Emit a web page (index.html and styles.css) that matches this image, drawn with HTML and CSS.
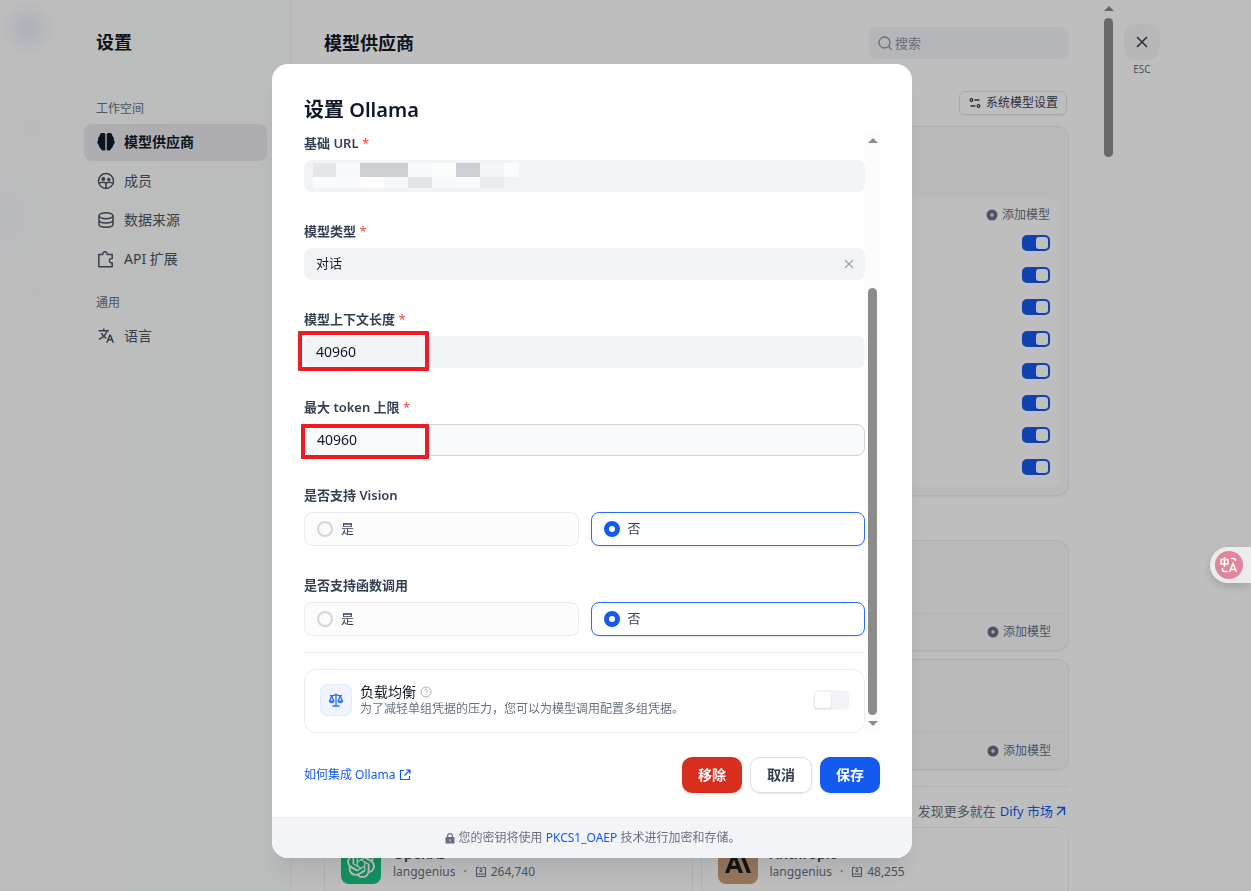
FILE: index.html
```
<!DOCTYPE html>
<html lang="zh-CN">
	<head>
		<meta charset="utf-8">
		<title>设置</title>
		<link rel="stylesheet" href="styles.css">
	</head>
	<body>
		<svg width="0" height="0" class="defs">
			<symbol id="plus" viewBox="0 0 12 12"><path fill-rule="evenodd" fill="currentColor" d="M6 .5a5.500 5.500 0 1 0 0 11a5.500 5.500 0 0 0 0-11zM5.400 4h1.200v1.400H8v1.200H6.600V8H5.400V6.600H4V5.400h1.400z"/></symbol>
			<symbol id="count" viewBox="0 0 12 12"><path fill="none" stroke="currentColor" d="M4 1.500H1.500v9h9v-9H8M1.500 8h9M6 2v4M4.500 4.500L6 6l1.500-1.500M4.500 2h3"/></symbol>
		</svg>

		<div class="app">
			<nav class="side">
				<h1 class="side-title">设置</h1>
				<div class="group">工作空间</div>
				<a class="item active" href="#">
					<svg width="18" height="18" viewBox="0 0 18 18"><path fill="currentColor" d="M8.300 1v16a3 3 0 0 1-4.600-1.600A3 3 0 0 1 2 12.300A3.600 3.600 0 0 1 1.200 7a3.200 3.200 0 0 1 1.400-3.700A3.200 3.200 0 0 1 8.300 1zM9.700 1v16a3 3 0 0 0 4.600-1.600a3 3 0 0 0 1.700-3.100A3.600 3.600 0 0 0 16.800 7a3.200 3.200 0 0 0-1.400-3.700A3.200 3.200 0 0 0 9.700 1z"/></svg>
					模型供应商
				</a>
				<a class="item" href="#">
					<svg width="18" height="18" viewBox="0 0 18 18" fill="none" stroke="currentColor" stroke-width="1.500"><circle cx="9" cy="9" r="7.500"/><path d="M2 11.500c2-1.500 5-1.500 7-.5c2-1 5-1 7 .5M9 11v5.500"/><circle cx="6.300" cy="7" r="1.200" fill="currentColor"/><circle cx="11.800" cy="7.600" r="1" fill="currentColor"/></svg>
					成员
				</a>
				<a class="item" href="#">
					<svg width="18" height="18" viewBox="0 0 18 18" fill="none" stroke="currentColor" stroke-width="1.500"><ellipse cx="9" cy="4.800" rx="7" ry="3"/><path d="M2 4.800v8.400c0 1.700 3 3 7 3s7-1.300 7-3V4.800M2 9c0 1.700 3 3 7 3s7-1.300 7-3"/></svg>
					数据来源
				</a>
				<a class="item" href="#">
					<svg width="18" height="18" viewBox="0 0 18 18" fill="none" stroke="currentColor" stroke-width="1.500" stroke-linejoin="round"><path d="M1.800 4.500h4a2.200 2.200 0 1 1 4.300 0h5.100v4a2.200 2.200 0 1 0 0 4.200v4H1.800z"/></svg>
					API 扩展
				</a>
				<div class="group">通用</div>
				<a class="item" href="#">
					<svg width="20" height="20" viewBox="0 0 24 24"><path fill="currentColor" d="M18.500 10L22.900 21H20.745L19.544 18H15.454L14.255 21H12.101L16.500 10H18.500ZM10 2V4H16V6L14.032 6C13.242 8.366 12 10.506 10.411 12.301C11.134 12.946 11.917 13.518 12.747 14.008L12 15.885C10.924 15.278 9.919 14.552 9 13.725C7.214 15.332 5.109 16.555 2.799 17.273L2.262 15.344C4.238 14.720 6.045 13.674 7.590 12.302C6.463 11.028 5.509 9.580 4.767 8L7.007 8C7.570 9.039 8.240 10.003 9 10.877C10.228 9.465 11.220 7.816 11.909 6L2 6V4H8V2H10ZM17.500 12.885L16.253 16H18.745L17.500 12.885Z"/></svg>
					语言
				</a>
			</nav>

			<main class="main">
				<header class="head">
					<h2>模型供应商</h2>
					<label class="search">
						<svg width="16" height="16" viewBox="0 0 16 16" fill="none" stroke="currentColor" stroke-width="1.300"><circle cx="7.500" cy="7.500" r="5.500"/><path d="M11.500 11.500l3 3"/></svg>
						<input type="text" placeholder="搜索" aria-label="搜索">
					</label>
				</header>
				<div class="toolbar">
					<button class="system">
						<svg width="12" height="12" viewBox="0 0 12 12" fill="none" stroke="currentColor" stroke-width="1.300"><circle cx="2.500" cy="3" r="1.300"/><path d="M5.500 3H10.500M1.500 9h5"/><circle cx="9.500" cy="9" r="1.300"/></svg>
						系统模型设置
					</button>
				</div>

				<section class="provider first">
					<div class="summary"></div>
					<div class="models">
						<div class="add-row"><button class="add"><svg width="12" height="12"><use href="#plus"/></svg>添加模型</button></div>
						<div class="model"><input type="checkbox" class="toggle" aria-label="启用模型 1" checked></div>
						<div class="model"><input type="checkbox" class="toggle" aria-label="启用模型 2" checked></div>
						<div class="model"><input type="checkbox" class="toggle" aria-label="启用模型 3" checked></div>
						<div class="model"><input type="checkbox" class="toggle" aria-label="启用模型 4" checked></div>
						<div class="model"><input type="checkbox" class="toggle" aria-label="启用模型 5" checked></div>
						<div class="model"><input type="checkbox" class="toggle" aria-label="启用模型 6" checked></div>
						<div class="model"><input type="checkbox" class="toggle" aria-label="启用模型 7" checked></div>
						<div class="model"><input type="checkbox" class="toggle" aria-label="启用模型 8" checked></div>
					</div>
				</section>
				<section class="provider">
					<div class="summary"></div>
					<div class="bottom"><button class="add"><svg width="12" height="12"><use href="#plus"/></svg>添加模型</button></div>
				</section>
				<section class="provider">
					<div class="summary"></div>
					<div class="bottom"><button class="add"><svg width="12" height="12"><use href="#plus"/></svg>添加模型</button></div>
				</section>

				<div class="more">
					发现更多就在 <a href="#">Dify 市场<svg width="12" height="12" viewBox="0 0 12 12" fill="none" stroke="currentColor" stroke-width="1.400"><path d="M2 2.500h7.500V10M9.500 2.500L2 10"/></svg></a>
				</div>
				<div class="market">
					<article class="plugin">
						<div class="logo openai">
							<svg width="28" height="28" viewBox="0 0 24 24" fill="currentColor"><path d="M22.2819 9.8211a5.9847 5.9847 0 0 0-.5157-4.9108 6.0462 6.0462 0 0 0-6.5098-2.9A6.0651 6.0651 0 0 0 4.9807 4.1818a5.9847 5.9847 0 0 0-3.9977 2.9 6.0462 6.0462 0 0 0 .7427 7.0966 5.98 5.98 0 0 0 .511 4.9107 6.051 6.051 0 0 0 6.5146 2.9001A5.9847 5.9847 0 0 0 13.2599 24a6.0557 6.0557 0 0 0 5.7718-4.2058 5.9894 5.9894 0 0 0 3.9977-2.9001 6.0557 6.0557 0 0 0-.7475-7.0729zm-9.022 12.6081a4.4755 4.4755 0 0 1-2.8764-1.0408l.1419-.0804 4.7783-2.7582a.7948.7948 0 0 0 .3927-.6813v-6.7369l2.02 1.1686a.071.071 0 0 1 .038.052v5.5826a4.504 4.504 0 0 1-4.4945 4.4944zm-9.6607-4.1254a4.4708 4.4708 0 0 1-.5346-3.0137l.142.0852 4.783 2.7582a.7712.7712 0 0 0 .7806 0l5.8428-3.3685v2.3324a.0804.0804 0 0 1-.0332.0615L9.74 19.9502a4.4992 4.4992 0 0 1-6.1408-1.6464zM2.3408 7.8956a4.485 4.485 0 0 1 2.3655-1.9728V11.6a.7664.7664 0 0 0 .3879.6765l5.8144 3.3543-2.0201 1.1685a.0757.0757 0 0 1-.071 0l-4.8303-2.7865A4.504 4.504 0 0 1 2.3408 7.872zm16.5963 3.8558L13.1038 8.364 15.1192 7.2a.0757.0757 0 0 1 .071 0l4.8303 2.7913a4.4944 4.4944 0 0 1-.6765 8.1042v-5.6772a.79.79 0 0 0-.407-.667zm2.0107-3.0231l-.142-.0852-4.7735-2.7818a.7759.7759 0 0 0-.7854 0L9.409 9.2297V6.8974a.0662.0662 0 0 1 .0284-.0615l4.8303-2.7866a4.4992 4.4992 0 0 1 6.6802 4.66zM8.3065 12.863l-2.02-1.1638a.0804.0804 0 0 1-.038-.0567V6.0742a4.4992 4.4992 0 0 1 7.3757-3.4537l-.142.0805L8.704 5.459a.7948.7948 0 0 0-.3927.6813zm1.0976-2.3654l2.602-1.4998 2.6069 1.4998v2.9994l-2.5974 1.4997-2.6067-1.4997Z"/></svg>
						</div>
						<div>
							<div class="name">OpenAI</div>
							<div class="meta">langgenius <span class="dot">·</span> <svg width="12" height="12"><use href="#count"/></svg>264,740</div>
						</div>
					</article>
					<article class="plugin">
						<div class="logo anthropic">
							<svg width="26" height="18" viewBox="0 0 26 18"><path fill="currentColor" fill-rule="evenodd" d="M7 0h4l7 18h-4l-1.500-4H5.500L4 18H0zM9 4.500L6.700 10.700h4.600zM15 0h4l7 18h-4z"/></svg>
						</div>
						<div>
							<div class="name">Anthropic</div>
							<div class="meta">langgenius <span class="dot">·</span> <svg width="12" height="12"><use href="#count"/></svg>48,255</div>
						</div>
					</article>
				</div>
			</main>

			<div class="bar page-bar"><i class="up"></i><i class="thumb"></i></div>
			<aside class="close-area">
				<button class="close" aria-label="关闭"><svg width="12" height="12" viewBox="0 0 12 12" stroke="currentColor" stroke-width="1.600"><path d="M1 1l10 10M11 1L1 11"/></svg></button>
				<span>ESC</span>
			</aside>
		</div>

		<div class="overlay">
			<form class="modal">
				<div class="content">
					<h2>设置 Ollama</h2>
					<div class="scroll">
						<div class="fields">
							<div class="field">
								<label for="url">基础 URL <b>*</b></label>
								<div class="box">
									<input id="url" type="text">
									<svg class="mosaic" width="206" height="26" viewBox="0 0 206 26" shape-rendering="crispEdges">
										<path fill="#e4e6e9" d="M0 0h23v14H0z"/><path fill="#f7f8fa" d="M23 0h24v14H23zM95 0h24v14H95zM71 14h24v11H71zM119 14h24v11H119z"/><path fill="#cdd0d5" d="M47 0h48v14H47zM143 0h24v14H143z"/><path fill="#fbfdfc" d="M119 0h24v14H119zM191 0h15v14H191z"/><path fill="#f3f5f9" d="M167 0h24v14H167z"/><path fill="#f9fbfd" d="M0 14h47v11H0zM143 14h24v11H143z"/><path fill="#fefefe" d="M47 14h24v11H47z"/><path fill="#e2e4e8" d="M95 14h24v11H95z"/><path fill="#e9ebee" d="M167 14h24v11H167z"/>
									</svg>
								</div>
							</div>
							<div class="field">
								<label for="type">模型类型 <b>*</b></label>
								<div class="box">
									<select id="type"><option>对话</option></select>
									<button type="button" class="clear" aria-label="清除"><svg width="10" height="10" viewBox="0 0 10 10" stroke="currentColor" stroke-width="1.200"><path d="M1 1l8 8M9 1L1 9"/></svg></button>
								</div>
							</div>
							<div class="field">
								<label for="context">模型上下文长度 <b>*</b></label>
								<div class="box">
									<input id="context" type="text" value="40960">
									<span class="mark mark-context"></span>
								</div>
							</div>
							<div class="field">
								<label for="token">最大 token 上限 <b>*</b></label>
								<div class="box">
									<input id="token" class="current" type="text" value="40960">
									<span class="mark mark-token"></span>
								</div>
							</div>
							<div class="field" role="radiogroup" aria-labelledby="vision">
								<div class="label" id="vision">是否支持 Vision</div>
								<div class="radios">
									<label class="radio"><input type="radio" name="vision"><span>是</span></label>
									<label class="radio"><input type="radio" name="vision" checked><span>否</span></label>
								</div>
							</div>
							<div class="field" role="radiogroup" aria-labelledby="func">
								<div class="label" id="func">是否支持函数调用</div>
								<div class="radios">
									<label class="radio"><input type="radio" name="func"><span>是</span></label>
									<label class="radio"><input type="radio" name="func" checked><span>否</span></label>
								</div>
							</div>
							<hr>
							<div class="balance">
								<div class="balance-icon">
									<svg width="16" height="16" viewBox="0 0 16 16" fill="none" stroke="currentColor" stroke-width="1.300"><path d="M8 1.500v12M4.500 14h7M2 3.700h3l3-1l3 1h3M3.700 4L1.600 9M3.700 4l2.100 5M12.300 4l-2.100 5M12.300 4l2.100 5M1.500 9.200c.5 2 3.900 2 4.400 0zM10.100 9.200c.5 2 3.900 2 4.400 0z"/></svg>
								</div>
								<div class="balance-text">
									<label for="lb">负载均衡 <svg width="12" height="12" viewBox="0 0 12 12" fill="none" stroke="#a9aeb8"><circle cx="6" cy="6" r="5"/><path d="M4.500 4.700a1.500 1.500 0 1 1 2.200 1.300q-.7.400-.7 1M6 8v1"/></svg></label>
									<p>为了减轻单组凭据的压力，您可以为模型调用配置多组凭据。</p>
								</div>
								<input type="checkbox" id="lb" class="toggle big">
							</div>
						</div>
						<div class="bar form-bar"><i class="up"></i><i class="thumb"></i><i class="down"></i></div>
					</div>
					<div class="actions">
						<a href="#">如何集成 Ollama <svg width="12" height="12" viewBox="0 0 12 12" fill="none" stroke="currentColor" stroke-width="1.200"><path d="M5 1.500H1.500v9h9V7M7 1h4v4M11 1L5.500 6.500"/></svg></a>
						<button type="button" class="btn remove">移除</button>
						<button type="button" class="btn cancel">取消</button>
						<button type="button" class="btn save">保存</button>
					</div>
				</div>
				<footer class="secret">
					<svg width="12" height="12" viewBox="0 0 12 12"><path fill="currentColor" fill-rule="evenodd" d="M3 5V4a3 3 0 0 1 6 0v1h1.500v6.500h-9V5zM4.200 5h3.600V4a1.800 1.800 0 0 0-3.600 0zM5.500 7.300v2h1v-2z"/></svg>
					<span>您的密钥将使用 <a href="#">PKCS1_OAEP</a> 技术进行加密和存储。</span>
				</footer>
			</form>
		</div>

		<button class="translate" aria-label="翻译">
			<svg width="28" height="28" viewBox="0 0 28 28"><circle cx="14" cy="14" r="14" fill="#e2859c"/><path fill="none" stroke="#fff" stroke-width="1.600" d="M6 8.500h7v4.500H6zM9.500 6v10M16 7.500h2.500q2 0 2 2.500M7.500 17v1.500q0 2 2 2h3M14.500 21l3.500-8.500L21.500 21M15.500 18.500h5"/></svg>
		</button>
	</body>
</html>
```
FILE: styles.css
```
* {
	box-sizing: border-box;
}
body {
	margin: 0;
	height: 100vh;
	overflow: hidden;
	background-color: #fefefe;
	color: #354052;
	font-family: "Noto Sans", "Noto Sans CJK SC", sans-serif;
	font-size: 12px;
	line-height: 16px;
}
h1, h2, p {
	margin: 0;
}
button, input, select {
	margin: 0;
	padding: 0;
	border: 0;
	background: none;
	color: inherit;
	font: inherit;
}
a {
	color: #155aef;
	text-decoration: none;
}
svg {
	flex: none;
}
.defs {
	position: absolute;
}

/* page */
.app {
	display: flex;
	height: 100vh;
	overflow: hidden;
}
.side {
	flex: none;
	width: 292px;
	padding: 0 24px 0 84px;
	border-right: 1px solid #f0f2f2;
	background:
		radial-gradient(circle at 28px 28px, #e8ecfa 0, #e8ecfa00 26px),
		radial-gradient(circle at 0 215px, #f5f7fc 0, #f5f7fc00 50px),
		radial-gradient(circle at 34px 130px, #f8f8f8 0, #f8f8f800 26px),
		radial-gradient(circle at 34px 292px, #f9f9f9 0, #f9f9f900 26px),
		linear-gradient(to right, #fcfcfc, #f9fdfb);
}
.side-title {
	padding-left: 12px;
	color: #101828;
	font-size: 18px;
	line-height: 84px;
}
.group {
	margin: 17px 0 7px;
	padding: 0 12px;
	color: #676f83;
}
.item {
	display: flex;
	align-items: center;
	gap: 9px;
	height: 37px;
	margin-bottom: 2px;
	padding: 0 0 2px 13px;
	border-radius: 8px;
	color: #495464;
	font-size: 14px;
}
.item svg {
	width: 18px;
	height: 18px;
}
.active {
	background-color: #e8e9ee;
	color: #101828;
	font-weight: 600;
}
.main {
	flex: 1;
	min-width: 0;
	padding: 0 32px;
}
.head {
	display: flex;
	align-items: center;
	justify-content: space-between;
	height: 86px;
}
.head h2 {
	color: #101828;
	font-size: 18px;
}
.search {
	display: flex;
	align-items: center;
	gap: 2px;
	width: 200px;
	height: 32px;
	padding: 0 8px;
	border-radius: 8px;
	background-color: #f0f3f7;
	color: #8b93a5;
}
.search input {
	width: 100%;
	font-size: 13px;
}
.search input::placeholder {
	color: #8b93a5;
}
.toolbar {
	display: flex;
	justify-content: flex-end;
	padding: 5px 2px 11px;
}
.system {
	display: flex;
	align-items: center;
	gap: 5px;
	height: 24px;
	padding: 0 8px 0 9px;
	border: 1px solid #dfe1e5;
	border-radius: 6px;
	box-shadow: 0 1px 2px #1018280d;
}
.provider {
	margin-bottom: 8px;
	border: 1px solid #e9eaec;
	border-radius: 12px;
	background-color: #f9f9fa;
	box-shadow: 0 1px 2px #1018280d;
}
.first {
	margin-bottom: 44px;
	padding: 0 8px 8px;
}
.summary {
	height: 72px;
}
.models {
	padding: 0 10px 4px;
	border-radius: 8px;
	background-color: #fefefe;
}
.add-row {
	display: flex;
	justify-content: flex-end;
	align-items: flex-end;
	height: 28px;
	padding-bottom: 4px;
}
.add {
	display: flex;
	align-items: center;
	gap: 4px;
	color: #676f83;
}
.model {
	display: flex;
	align-items: center;
	justify-content: flex-end;
	height: 32px;
}
.bottom {
	display: flex;
	align-items: center;
	justify-content: flex-end;
	height: 37px;
	padding-right: 17px;
	border-top: 1px solid #eeeff0;
}
.toggle {
	appearance: none;
	display: flex;
	width: 28px;
	height: 16px;
	padding: 2px;
	border-radius: 5px;
	background-color: #f2f4f7;
}
.toggle::before {
	content: "";
	width: 12px;
	height: 12px;
	border-radius: 3px;
	background-color: #fff;
	box-shadow: 0 1px 2px #10182820;
}
.toggle:checked {
	justify-content: flex-end;
	background-color: #155aef;
}
.more {
	display: flex;
	justify-content: flex-end;
	align-items: center;
	gap: 4px;
	margin-top: 16px;
	padding: 8px 2px 0 0;
	border-top: 1px solid #edeef0;
	color: #676f83;
	font-size: 13px;
	line-height: 32px;
}
.more a {
	display: flex;
	align-items: center;
	gap: 2px;
}
.market {
	display: grid;
	grid-template-columns: 1fr 1fr;
	gap: 8px;
}
.plugin {
	display: flex;
	gap: 12px;
	padding: 16px;
	border: 1px solid #edeef0;
	border-radius: 12px;
}
.logo {
	display: flex;
	align-items: center;
	justify-content: center;
	width: 40px;
	height: 40px;
	border-radius: 8px;
}
.openai {
	background-color: #19c37d;
	color: #fff;
}
.anthropic {
	background-color: #ca9f7b;
	color: #191918;
}
.name {
	color: #354052;
	font-size: 14px;
	font-weight: 600;
	line-height: 20px;
}
.meta {
	display: flex;
	align-items: center;
	gap: 4px;
	color: #676f83;
}
.dot {
	margin: 0 4px;
}

/* scrollbars */
.bar {
	display: flex;
	flex: none;
	flex-direction: column;
	align-items: center;
	width: 15px;
	background-color: #fcfcfc;
}
.up, .down {
	border: 5px solid transparent;
	border-top-width: 0;
	border-bottom: 5px solid #8b8b8b;
}
.down {
	border-top: 5px solid #8b8b8b;
	border-bottom-width: 0;
}
.thumb {
	width: 9px;
	border-radius: 5px;
	background-color: #8b8b8b;
}
.page-bar {
	gap: 7px;
	padding-top: 6px;
}
.page-bar .thumb {
	height: 139px;
}
.form-bar {
	padding: 6px 0 7px;
	justify-content: flex-end;
	gap: 6px;
}
.form-bar .up {
	margin-bottom: auto;
}
.form-bar .thumb {
	height: 427px;
}
.close-area {
	display: flex;
	flex: none;
	flex-direction: column;
	align-items: center;
	align-self: flex-start;
	width: 52px;
	margin-right: 83px;
	padding-top: 24px;
	color: #676f83;
	font-size: 10px;
	line-height: 18px;
}
.close {
	display: flex;
	align-items: center;
	justify-content: center;
	width: 36px;
	height: 36px;
	border-radius: 10px;
	background-color: #f5f5f6;
	color: #354052;
}

/* dialog */
.overlay {
	position: fixed;
	inset: 0;
	display: flex;
	align-items: flex-start;
	justify-content: center;
	padding: 64px 67px 0 0;
	background-color: rgba(0, 0, 0, 0.25);
}
.modal {
	width: 640px;
	border-radius: 16px;
	background-color: #fff;
	box-shadow: 0 20px 24px -4px #10182814, 0 8px 8px -4px #10182808;
	overflow: hidden;
}
.content {
	padding: 32px 32px 24px;
}
.content h2 {
	margin-bottom: 8px;
	color: #101828;
	font-size: 20px;
	font-weight: 600;
	line-height: 28px;
}
.scroll {
	display: flex;
}
.fields {
	flex: 1;
	min-width: 0;
}
.field {
	margin-bottom: 28px;
}
.field > label, .label {
	display: block;
	margin-bottom: 6px;
	font-size: 13px;
	font-weight: 600;
	line-height: 22px;
}
.field b {
	color: #f04438;
	font-weight: 400;
}
.box {
	position: relative;
	display: flex;
	align-items: center;
	height: 32px;
	border-radius: 8px;
	background-color: #f2f3f7;
}
.box input, .box select {
	appearance: none;
	flex: 1;
	height: 32px;
	padding: 0 12px 2px;
	border-radius: 8px;
	color: #101828;
	font-size: 14px;
}
.box select {
	font-size: 13px;
}
.box .current {
	border: 1px solid #d0d5dc;
	background-color: #f9fafb;
}
.clear {
	display: flex;
	padding: 0 11px;
	color: #98a2b2;
}
.mosaic {
	position: absolute;
	left: 9px;
	top: 3px;
}
.mark {
	position: absolute;
	border: 4px solid #ef1b24;
	border-radius: 1px;
}
.mark-context {
	left: -6px;
	top: -5px;
	width: 131px;
	height: 40px;
}
.mark-token {
	left: -3px;
	top: 0;
	width: 128px;
	height: 35px;
}
.radios {
	display: grid;
	grid-template-columns: 1fr 1fr;
	gap: 12px;
}
.radio {
	display: flex;
	align-items: center;
	gap: 8px;
	height: 34px;
	padding-left: 12px;
	border: 1px solid #e9ebf0;
	border-radius: 8px;
	background-color: #fcfcfd;
	font-size: 13px;
}
.radio span {
	padding-bottom: 2px;
}
.radio input {
	appearance: none;
	width: 16px;
	height: 16px;
	border: 2px solid #d0d5dc;
	border-radius: 50%;
}
.radio:has(:checked) {
	border-color: #296dff;
	background-color: #fff;
	box-shadow: 0 1px 2px #1018281a;
}
.radio input:checked {
	border: 5px solid #155aef;
}
hr {
	margin: -12px 0 16px;
	border: 0;
	border-top: 1px solid #e9ebee;
}
.balance {
	display: flex;
	align-items: center;
	gap: 8px;
	height: 64px;
	padding: 0 15px 2px;
	border: 1px solid #ebedf0;
	border-radius: 12px;
}
.balance-icon {
	display: flex;
	align-items: center;
	justify-content: center;
	width: 32px;
	height: 32px;
	border: 1px solid #dfe9ff;
	border-radius: 8px;
	background-color: #eff4ff;
	color: #296dff;
}
.balance-text {
	flex: 1;
}
.balance-text label {
	display: flex;
	align-items: center;
	gap: 4px;
	color: #101828;
	font-size: 14px;
	line-height: 18px;
}
.balance-text p {
	color: #676f83;
}
.big {
	width: 36px;
	height: 20px;
}
.big::before {
	width: 16px;
	height: 16px;
}
.actions {
	display: flex;
	align-items: center;
	gap: 8px;
	margin-top: 24px;
}
.actions a {
	display: flex;
	align-items: center;
	gap: 4px;
	margin-right: auto;
}
.btn {
	height: 36px;
	padding: 0 16px;
	border-radius: 10px;
	color: #fff;
	font-size: 14px;
	font-weight: 600;
	box-shadow: 0 1px 2px #1018281a;
}
.remove {
	background-color: #d92d20;
}
.cancel {
	border: 1px solid #dcdee3;
	color: #354052;
}
.save {
	background-color: #155aef;
}
.secret {
	display: flex;
	align-items: center;
	justify-content: center;
	gap: 3px;
	height: 41px;
	border-top: 1px solid #e9ebf0;
	background-color: #f2f4f8;
	color: #676f83;
}

.translate {
	position: fixed;
	top: 547px;
	right: 0;
	display: flex;
	align-items: center;
	width: 41px;
	height: 36px;
	padding-left: 5px;
	border-radius: 18px 0 0 18px;
	background-color: #ececec;
	box-shadow: 0 4px 10px #00000026;
}
```
